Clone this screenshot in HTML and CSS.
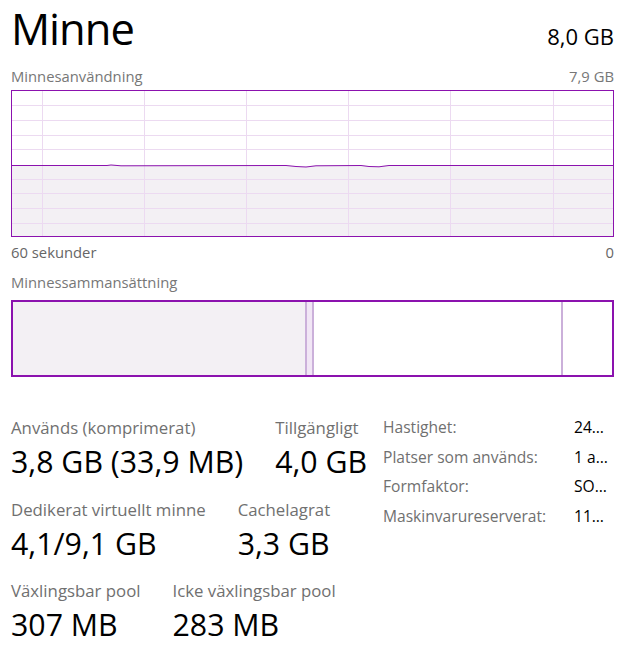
FILE: index.html
```html
<!DOCTYPE html>
<html lang="sv">
<head>
<meta charset="utf-8">
<title>Minne</title>
<link rel="stylesheet" href="styles.css">
</head>
<body>
<div class="page">
  <header class="head">
    <h1 class="title">Minne</h1>
    <div class="total">8,0 GB</div>
  </header>

  <div class="caption-row graph-caption">
    <span>Minnesanvändning</span>
    <span>7,9 GB</span>
  </div>

  <div class="graph">
    <svg class="graph-svg" width="603" height="147" viewBox="0 0 603 147">
      <path class="area" d="M1 75 L96 75 L100 74.5 L110 75.3 L275 75 L285 76 L295 76.5 L305 75.3 L350 75 L358 76 L368 76.3 L378 75 L602 75 L602 146 L1 146 Z"/>
      <g class="grid">
        <line x1="31.5" y1="0" x2="31.5" y2="147"/>
        <line x1="133.5" y1="0" x2="133.5" y2="147"/>
        <line x1="235.5" y1="0" x2="235.5" y2="147"/>
        <line x1="337.5" y1="0" x2="337.5" y2="147"/>
        <line x1="439.5" y1="0" x2="439.5" y2="147"/>
        <line x1="542.5" y1="0" x2="542.5" y2="147"/>
        <line x1="0" y1="15.5" x2="603" y2="15.5"/>
        <line x1="0" y1="30.5" x2="603" y2="30.5"/>
        <line x1="0" y1="45.5" x2="603" y2="45.5"/>
        <line x1="0" y1="59.5" x2="603" y2="59.5"/>
        <line x1="0" y1="89.5" x2="603" y2="89.5"/>
        <line x1="0" y1="103.5" x2="603" y2="103.5"/>
        <line x1="0" y1="118.5" x2="603" y2="118.5"/>
        <line x1="0" y1="133.5" x2="603" y2="133.5"/>
      </g>
      <path class="usage" d="M1 75.5 L96 75.5 L100 75 L110 75.8 L275 75.5 L285 76.5 L295 77 L305 75.8 L350 75.5 L358 76.5 L368 76.8 L378 75.5 L602 75.5"/>
      <rect class="frame" x="0.5" y="0.5" width="602" height="146"/>
    </svg>
  </div>

  <div class="caption-row axis">
    <span>60 sekunder</span>
    <span>0</span>
  </div>

  <div class="caption-row comp-caption">
    <span>Minnessammansättning</span>
  </div>

  <div class="composition">
    <div class="seg seg-inuse"></div>
    <div class="seg seg-modified"></div>
    <div class="seg seg-standby"></div>
    <div class="seg seg-free"></div>
  </div>

  <section class="stats">
    <div class="stats-main">
      <div class="stat-row">
        <div class="stat">
          <div class="stat-label">Används (komprimerat)</div>
          <div class="stat-value">3,8 GB (33,9 MB)</div>
        </div>
        <div class="stat">
          <div class="stat-label">Tillgängligt</div>
          <div class="stat-value">4,0 GB</div>
        </div>
      </div>
      <div class="stat-row">
        <div class="stat">
          <div class="stat-label">Dedikerat virtuellt minne</div>
          <div class="stat-value">4,1/9,1 GB</div>
        </div>
        <div class="stat">
          <div class="stat-label">Cachelagrat</div>
          <div class="stat-value">3,3 GB</div>
        </div>
      </div>
      <div class="stat-row">
        <div class="stat">
          <div class="stat-label">Växlingsbar pool</div>
          <div class="stat-value">307 MB</div>
        </div>
        <div class="stat">
          <div class="stat-label">Icke växlingsbar pool</div>
          <div class="stat-value">283 MB</div>
        </div>
      </div>
    </div>
    <dl class="props">
      <dt>Hastighet:</dt><dd>2400 MHz</dd>
      <dt>Platser som används:</dt><dd>1 av 2</dd>
      <dt>Formfaktor:</dt><dd>SODIMM</dd>
      <dt>Maskinvarureserverat:</dt><dd>112 MB</dd>
    </dl>
  </section>
</div>
</body>
</html>
```

FILE: styles.css
```css
* { box-sizing: border-box; }
html, body { margin: 0; padding: 0; background: #ffffff; }
body {
  font-family: "Open Sans", "Noto Sans", "Liberation Sans", sans-serif;
  color: #000000;
}
.page {
  width: 629px;
  padding: 0 15px 0 11px;
}
.head {
  display: flex;
  justify-content: space-between;
  align-items: baseline;
  height: 62px;
}
.title {
  margin: 0;
  font-size: 43.5px;
  font-weight: 400;
  line-height: 58px;
  letter-spacing: -1px;
}
.total {
  font-size: 22px;
  line-height: 30px;
}
.caption-row {
  display: flex;
  justify-content: space-between;
  font-size: 14.8px;
  line-height: 20px;
  color: #777777;
}
.graph-caption { margin-top: 4px; height: 24px; }
.graph { height: 147px; }
.graph-svg { display: block; }
.area { fill: #f3f0f4; }
.grid line { stroke: #ecdaf1; stroke-width: 1; }
.usage { fill: none; stroke: #8b12ae; stroke-width: 1; }
.frame { fill: none; stroke: #8b12ae; stroke-width: 1; }
.axis { margin-top: 5px; height: 25px; color: #666666; }
.comp-caption { padding-top: 5px; height: 33px; }
.composition {
  display: flex;
  height: 77px;
  border: 2px solid #8b12ae;
}
.seg { height: 100%; }
.seg-inuse { width: 294px; background: #f3f0f4; border-right: 2px solid #cbb0da; }
.seg-modified { width: 7px; background: #f1e6f5; border-right: 2px solid #cbb0da; }
.seg-standby { width: 249px; background: #ffffff; border-right: 2px solid #cbb0da; }
.seg-free { flex: 1; background: #ffffff; }

.stats {
  display: flex;
  margin-top: 40px;
}
.stats-main { width: 372px; }
.stat-row {
  display: flex;
  gap: 32px;
  height: 81.5px;
}
.stat-label {
  font-size: 16.8px;
  line-height: 22px;
  color: #707070;
  white-space: nowrap;
}
.stat-value {
  margin-top: 3px;
  font-size: 30.3px;
  line-height: 40px;
  white-space: nowrap;
}
.props {
  margin: 0;
  display: grid;
  grid-template-columns: 191px 36px;
  grid-auto-rows: 29.5px;
  font-size: 15.6px;
  line-height: 20px;
}
.props dt { color: #707070; white-space: nowrap; }
.props dd {
  margin: 0;
  white-space: nowrap;
  overflow: hidden;
  text-overflow: ellipsis;
}
```
